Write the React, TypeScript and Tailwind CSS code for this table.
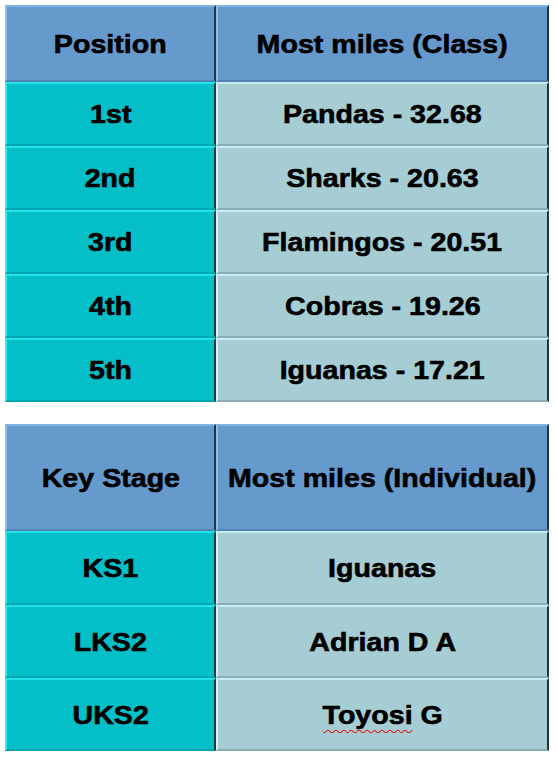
const font = "inline-block font-['Liberation_Sans',Arial,sans-serif] font-bold text-[26px] text-black leading-none scale-x-[1.1] [-webkit-text-stroke:0.6px_black]"

type Kind = 'head' | 'key' | 'val'

const cellStyles: Record<Kind, string> = {
    head: 'bg-[#6699cc] border-t-[#7fb3e3] border-l-[#8cc0ee] border-b-[#5482b0]',
    key: 'bg-[#04bfc7] border-t-[#1fe2ea] border-l-[#22f2fa] border-b-[#00a6ae]',
    val: 'bg-[#a5cdd3] border-t-[#c6edf1] border-l-[#d2f4f7] border-b-[#88adb3]',
}

const Cell = ({ kind, wide, children }: { kind: Kind; wide?: boolean; children: React.ReactNode }) => (
    <div
        className={`${cellStyles[kind]} ${wide ? 'w-[333px]' : 'w-[211px]'} flex items-center justify-center border-t-2 border-l-2 border-b-2 border-r-2 border-r-[#1f3644]`}
    >
        <span className={font}>{children}</span>
    </div>
)

const Row = ({ h, k, v, head }: { h: string; k: React.ReactNode; v: React.ReactNode; head?: boolean }) => (
    <div className={`flex ${h}`}>
        <Cell kind={head ? 'head' : 'key'}>{k}</Cell>
        <Cell kind={head ? 'head' : 'val'} wide>{v}</Cell>
    </div>
)

const classRows = [
    ['1st', 'Pandas - 32.68'],
    ['2nd', 'Sharks - 20.63'],
    ['3rd', 'Flamingos - 20.51'],
    ['4th', 'Cobras - 19.26'],
    ['5th', 'Iguanas - 17.21'],
]

export default function App() {
    return (
        <div className="w-[557px] h-[759px] bg-white pl-[5px] pt-[5px] flex flex-col gap-[22px]">
            <div className="flex flex-col w-[544px]">
                <Row head h="h-[77px]" k="Position" v="Most miles (Class)" />
                {classRows.map(([k, v]) => (
                    <Row key={k} h="h-[64px]" k={k} v={v} />
                ))}
            </div>

            <div className="flex flex-col w-[544px]">
                <Row head h="h-[107px]" k="Key Stage" v="Most miles (Individual)" />
                <Row h="h-[74px]" k="KS1" v="Iguanas" />
                <Row h="h-[73px]" k="LKS2" v="Adrian D A" />
                <Row
                    h="h-[73px]"
                    k="UKS2"
                    v={
                        <>
                            <span className="underline decoration-wavy decoration-[#e02020] decoration-1 underline-offset-[5px] [text-decoration-skip-ink:none]">Toyosi</span> G
                        </>
                    }
                />
            </div>
        </div>
    )
}
